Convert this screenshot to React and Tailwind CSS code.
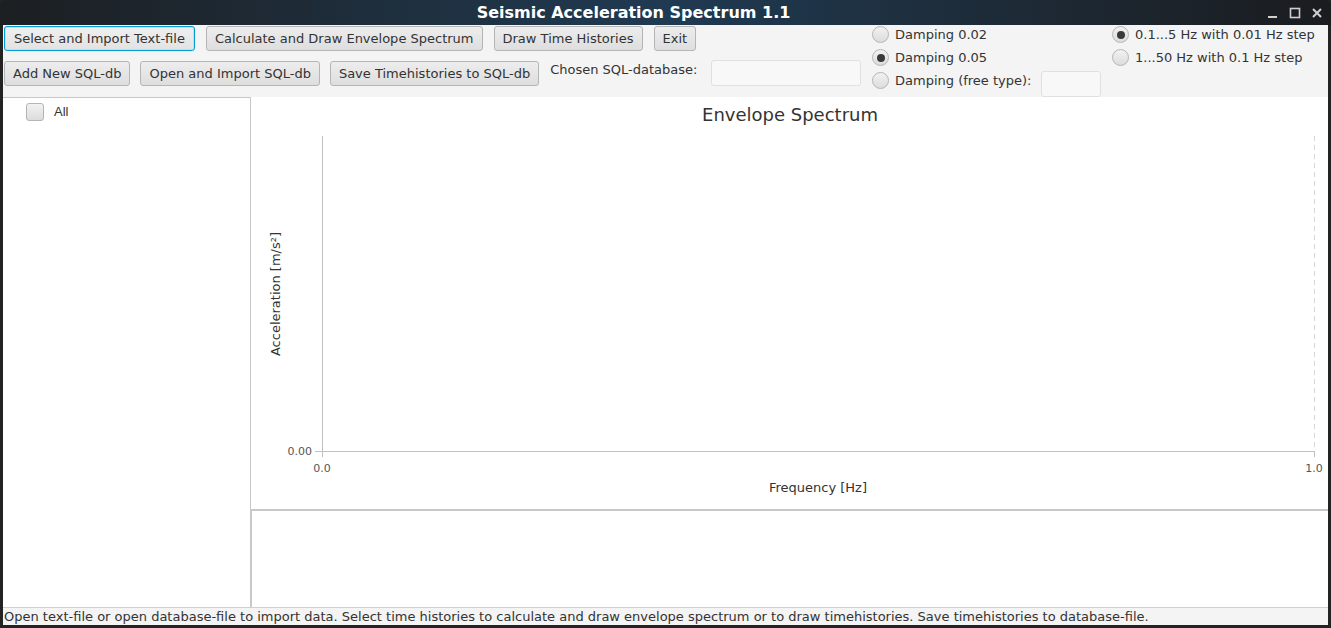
import React from "react";

const font = { fontFamily: '"DejaVu Sans", "Liberation Sans", sans-serif' };

const Button = ({ children, focused }) => (
  <button
    className={
      focused
        ? "h-[25px] px-[9px] rounded-[3px] border border-[#039ed3] bg-gradient-to-b from-[#f0f0f0] to-[#e2e2e2] text-[13px] text-[#333] leading-none whitespace-nowrap shadow-[inset_0_0_0_1px_#b8e3f3]"
        : "h-[25px] px-[8px] rounded-[3px] border border-[#b5b5b5] bg-gradient-to-b from-[#ededed] to-[#dedede] text-[13px] text-[#333] leading-none whitespace-nowrap"
    }
  >
    {children}
  </button>
);

const Radio = ({ label, checked, children }) => (
  <div className="flex items-center h-[23px]">
    <span className="w-[17px] h-[17px] rounded-full border border-[#b5b5b5] bg-gradient-to-b from-[#f2f2f2] to-[#dcdcdc] flex items-center justify-center">
      {checked && <span className="w-[8px] h-[8px] rounded-full bg-[#3a3a3a]" />}
    </span>
    <span className="ml-[6px] text-[13px] text-[#333] whitespace-nowrap">{label}</span>
    {children}
  </div>
);

const Chart = () => (
  <svg width="100%" height="412" viewBox="0 0 1077 412" className="block">
    <text x="539" y="24" textAnchor="middle" fontSize="18" fill="#333" fontFamily="DejaVu Sans">
      Envelope Spectrum
    </text>
    <line x1="71.5" y1="39" x2="71.5" y2="360" stroke="#c0c0c0" />
    <line x1="64" y1="354.5" x2="1063" y2="354.5" stroke="#c0c0c0" />
    <line x1="1063.5" y1="39" x2="1063.5" y2="354" stroke="#d8d8d8" strokeDasharray="5 4" />
    <line x1="1063.5" y1="354" x2="1063.5" y2="360" stroke="#c0c0c0" />
    <text x="61" y="358" textAnchor="end" fontSize="11" fill="#555" fontFamily="DejaVu Sans">
      0.00
    </text>
    <text x="71" y="375" textAnchor="middle" fontSize="11" fill="#555" fontFamily="DejaVu Sans">
      0.0
    </text>
    <text x="1063" y="375" textAnchor="middle" fontSize="11" fill="#555" fontFamily="DejaVu Sans">
      1.0
    </text>
    <text x="567" y="395" textAnchor="middle" fontSize="13" fill="#333" fontFamily="DejaVu Sans">
      Frequency [Hz]
    </text>
    <text
      x="0"
      y="0"
      transform="translate(29 197) rotate(-90)"
      textAnchor="middle"
      fontSize="13"
      fill="#333"
      fontFamily="DejaVu Sans"
    >
      Acceleration [m/s²]
    </text>
  </svg>
);

export default function App() {
  return (
    <div className="w-[1331px] h-[628px] bg-[#232323] overflow-hidden flex flex-col" style={font}>
      {/* Title bar */}
      <div className="h-[25px] shrink-0 rounded-t-[6px] bg-gradient-to-r from-[#1c1f22] via-[#1f3a52] to-[#1a1c1f] flex items-center">
        <div className="flex-1 text-center text-white font-bold text-[16px] leading-none">
          Seismic Acceleration Spectrum 1.1
        </div>
        <div className="flex items-center gap-[10px] pr-[8px]">
          <svg width="12" height="12" viewBox="0 0 12 12">
            <rect x="1" y="9" width="9" height="2" fill="#cfcfcf" />
          </svg>
          <svg width="12" height="12" viewBox="0 0 12 12">
            <rect x="1.5" y="1.5" width="9" height="9" fill="none" stroke="#cfcfcf" strokeWidth="1.6" />
          </svg>
          <svg width="12" height="12" viewBox="0 0 12 12">
            <path d="M2 2 L10 10 M10 2 L2 10" stroke="#cfcfcf" strokeWidth="2" />
          </svg>
        </div>
      </div>

      <div className="flex-1 mx-[3px] mb-[3px] bg-[#f4f4f4] flex flex-col min-h-0">
        {/* Toolbar */}
        <div className="h-[72px] shrink-0 flex">
          <div className="w-[858px] pl-[1px] pt-[1px] flex flex-col gap-[10px]">
            <div className="flex gap-[11px]">
              <Button focused>Select and Import Text-file</Button>
              <Button>Calculate and Draw Envelope Spectrum</Button>
              <Button>Draw Time Histories</Button>
              <Button>Exit</Button>
            </div>
            <div className="flex items-start gap-[10px]">
              <Button>Add New SQL-db</Button>
              <Button>Open and Import SQL-db</Button>
              <Button>Save Timehistories to SQL-db</Button>
              <span className="ml-[1px] text-[13px] text-[#333] leading-[16px] pt-[1px] whitespace-nowrap">
                Chosen SQL-database:
              </span>
              <div className="ml-[4px] -mt-[1px] w-[150px] h-[26px] rounded-[3px] border border-[#e0e0e0] bg-[#f8f8f8]" />
            </div>
          </div>
          <div className="ml-[11px] w-[240px] -mt-[2px] flex flex-col">
            <Radio label="Damping 0.02" />
            <Radio label="Damping 0.05" checked />
            <Radio label="Damping (free type):">
              <div className="ml-[10px] mt-[7px] w-[60px] h-[26px] rounded-[3px] border border-[#e0e0e0] bg-[#f8f8f8]" />
            </Radio>
          </div>
          <div className="-mt-[2px] flex flex-col">
            <Radio label="0.1...5 Hz with 0.01 Hz step" checked />
            <Radio label="1...50 Hz with 0.1 Hz step" />
          </div>
        </div>

        {/* Main area */}
        <div className="flex-1 flex min-h-0">
          <div className="w-[248px] shrink-0 bg-white border-t border-r border-[#c8c8c8] pt-[4px] pl-[23px]">
            <div className="flex items-center">
              <span className="w-[18px] h-[18px] rounded-[3px] border border-[#b5b5b5] bg-gradient-to-b from-[#f2f2f2] to-[#dcdcdc]" />
              <span className="ml-[10px] text-[13px] text-[#333]" style={{ fontFamily: '"Liberation Sans", sans-serif' }}>
                All
              </span>
            </div>
          </div>
          <div className="flex-1 flex flex-col min-w-0">
            <div className="h-[412px] bg-white">
              <Chart />
            </div>
            <div className="flex-1 bg-white border-t border-l border-[#c8c8c8] border-t-[2px]" />
          </div>
        </div>

        {/* Status bar */}
        <div className="h-[18px] shrink-0 border-t border-[#d0d0d0] pl-[1px] text-[13px] text-[#333] leading-[17px] whitespace-nowrap">
          Open text-file or open database-file to import data. Select time histories to calculate and draw envelope spectrum or to draw timehistories. Save timehistories to database-file.
        </div>
      </div>
    </div>
  );
}
